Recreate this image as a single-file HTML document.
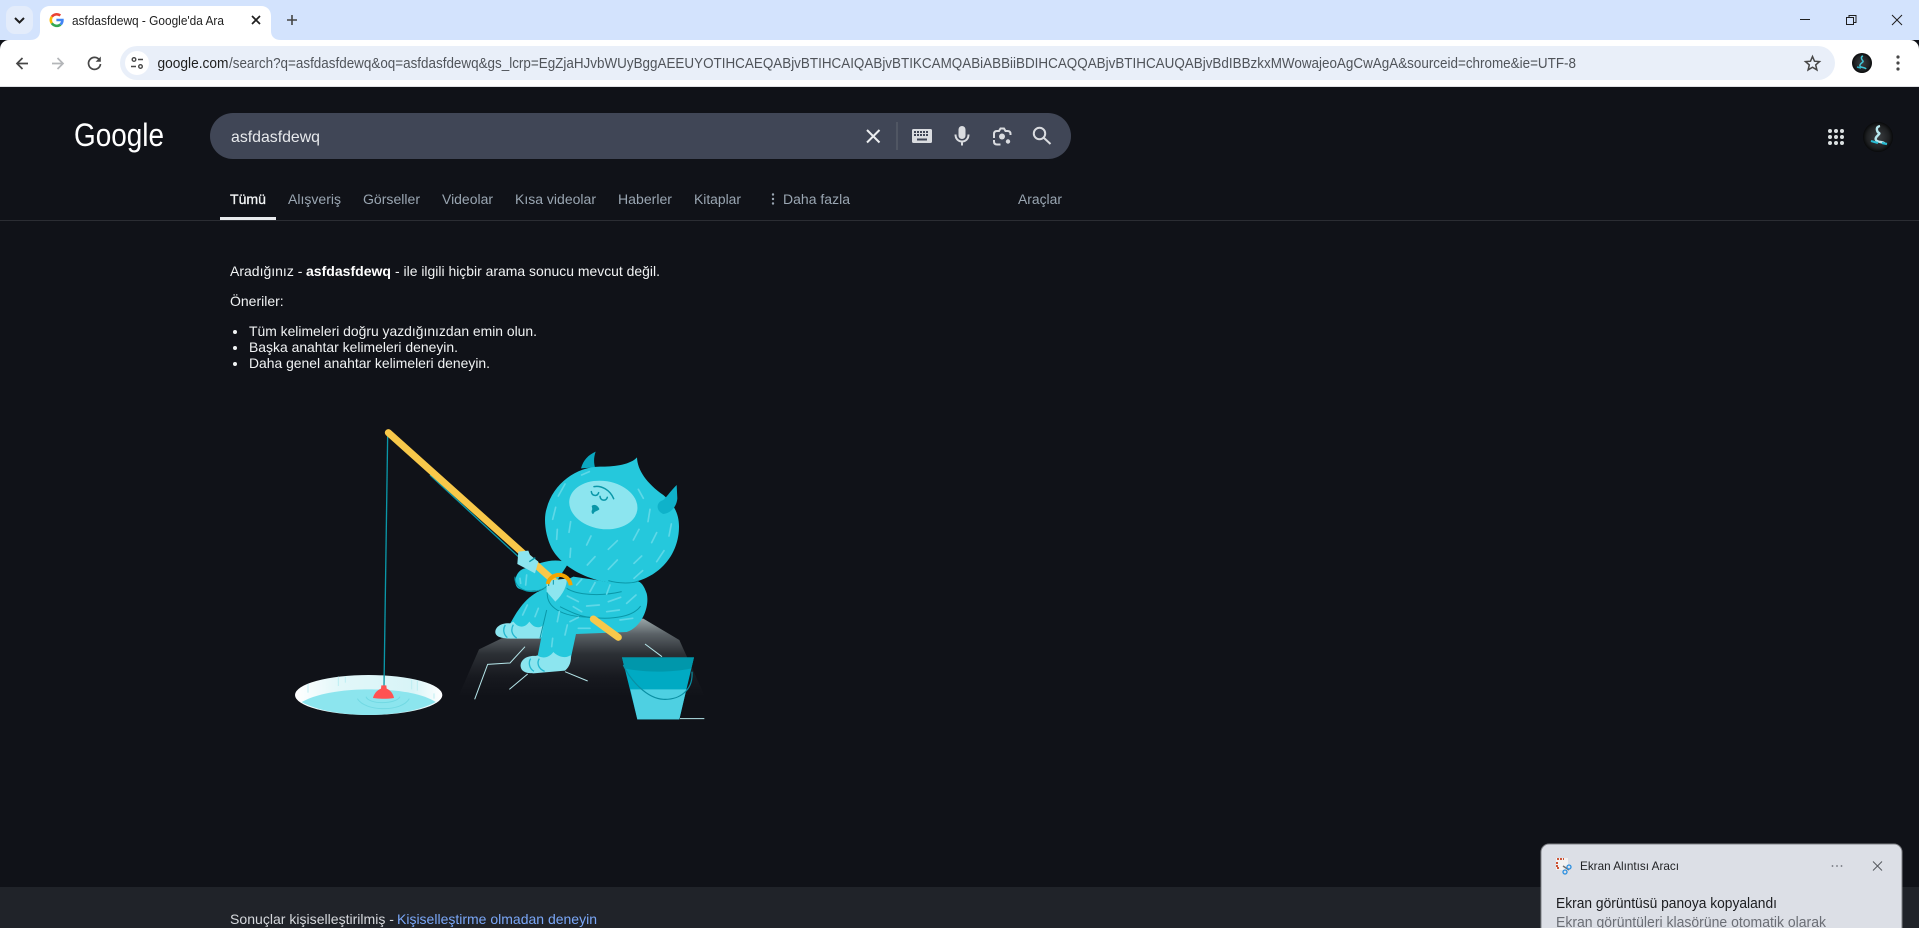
<!DOCTYPE html>
<html lang="tr">
<head>
<meta charset="utf-8">
<title>asfdasfdewq - Google'da Ara</title>
<style>
html,body{margin:0;padding:0;width:1919px;height:928px;overflow:hidden;background:#101218}
svg{display:block;position:absolute;left:0;top:0}
text{font-family:"Liberation Sans",Arial,sans-serif}
</style>
</head>
<body>
<svg width="1919" height="928" viewBox="0 0 1919 928" xmlns="http://www.w3.org/2000/svg">
<defs>
<linearGradient id="rock" x1="0" y1="596" x2="0" y2="830" gradientUnits="userSpaceOnUse"><stop offset="0" stop-color="#9aa6a8"/><stop offset=".2" stop-color="#5a6166"/><stop offset=".45" stop-color="#2c3035"/><stop offset=".75" stop-color="#17191f"/><stop offset="1" stop-color="#101218"/></linearGradient>
<linearGradient id="ice" x1="45" y1="0" x2="487" y2="0" gradientUnits="userSpaceOnUse"><stop offset="0" stop-color="#fff"/><stop offset=".3" stop-color="#e2f7f9"/><stop offset=".8" stop-color="#d8f4f7"/><stop offset="1" stop-color="#fff"/></linearGradient>
<radialGradient id="av" cx=".5" cy=".5" r=".5"><stop offset="0" stop-color="#3c3f42"/><stop offset=".75" stop-color="#1e2022"/><stop offset="1" stop-color="#08090a"/></radialGradient>
</defs>

<!-- Tab strip -->
<rect width="1919" height="40" fill="#d3e3fd"/>
<rect x="6" y="6" width="27" height="28" rx="9" fill="#e3ecfb"/>
<path d="M15 18l4.500 4.500 4.500-4.500" fill="none" stroke="#1f1f1f" stroke-width="2"/>
<path d="M30 40c6 0 10-3 10-9V16c0-6 4-10 10-10h211c6 0 10 4 10 10v15c0 6 4 9 10 9z" fill="#fff"/>
<g fill="none" stroke-width="2.600">
<path d="M60.300 15.500a6 6 0 0 0-8.500 1.300" stroke="#ea4335"/>
<path d="M51.800 16.800a6 6 0 0 0 0 6.400" stroke="#fbbc05"/>
<path d="M51.800 23.200a6 6 0 0 0 8.800 1.300" stroke="#34a853"/>
<path d="M60.600 24.500a6 6 0 0 0 1.800-4.500h-6" stroke="#4285f4"/>
</g>
<text x="72" y="25" font-size="12.500" fill="#1f1f1f" textLength="152" lengthAdjust="spacingAndGlyphs">asfdasfdewq - Google'da Ara</text>
<path d="M252 16l8 8m0-8l-8 8" stroke="#1f1f1f" stroke-width="1.700" fill="none"/>
<path d="M292 15v10m-5-5h10" stroke="#444" stroke-width="1.600" fill="none"/>

<!-- Window controls -->
<path d="M1800 19.500h10" stroke="#1f1f1f" stroke-width="1"/>
<path d="M1846.500 17.500h7v7h-7zM1849 17.500v-2h7v7h-2" fill="none" stroke="#1f1f1f" stroke-width="1"/>
<path d="M1892 15l10 10m0-10l-10 10" stroke="#1f1f1f" stroke-width="1" fill="none"/>

<!-- Toolbar -->
<path d="M0 87V49a9 9 0 0 1 9-9h1901a9 9 0 0 1 9 9v38z" fill="#fff"/>
<rect x="0" y="86" width="1919" height="1" fill="#dfe1e5"/>
<path d="M28 63.500H17m5.500-5.500l-5.500 5.500 5.500 5.500" fill="none" stroke="#474747" stroke-width="1.700"/>
<path d="M52 63.500h11m-5.500-5.500l5.500 5.500-5.500 5.500" fill="none" stroke="#b4b6b9" stroke-width="1.700"/>
<path d="M99.500 60a6 6 0 1 0 1 4" fill="none" stroke="#474747" stroke-width="1.700"/><path d="M100.800 56.500v5.200h-5.200z" fill="#474747"/>
<rect x="120" y="46" width="1715" height="34" rx="17" fill="#e9eff9"/>
<circle cx="137" cy="63" r="12" fill="#fff"/>
<g fill="none" stroke="#474747" stroke-width="1.400"><circle cx="134" cy="59.500" r="1.800"/><path d="M138 59.500h5M131 66.500h5"/><circle cx="140.500" cy="66.500" r="1.800"/></g>
<text x="157.500" y="68" font-size="14.500" fill="#1f1f1f" textLength="71" lengthAdjust="spacingAndGlyphs">google.com</text>
<text x="229" y="68" font-size="14.500" fill="#50545a" textLength="1347" lengthAdjust="spacingAndGlyphs">/search?q=asfdasfdewq&amp;oq=asfdasfdewq&amp;gs_lcrp=EgZjaHJvbWUyBggAEEUYOTIHCAEQABjvBTIHCAIQABjvBTIKCAMQABiABBiiBDIHCAQQABjvBTIHCAUQABjvBdIBBzkxMWowajeoAgCwAgA&amp;sourceid=chrome&amp;ie=UTF-8</text>
<path d="M1812.500 56.500l2 4.700 5 .4-3.800 3.300 1.200 5-4.400-2.700-4.400 2.700 1.200-5-3.800-3.300 5-.4z" fill="none" stroke="#474747" stroke-width="1.500"/>
<circle cx="1862" cy="63" r="10" fill="url(#av)"/>
<path d="M1863 56c-3 1-1 4 0 5s-4 3-3 5 5 1 6 3" fill="none" stroke="#3fc6d8" stroke-width="1.500"/><path d="M1857 67l4 1" stroke="#2fb6cc" stroke-width="1.500"/>
<g fill="#474747"><circle cx="1898" cy="57" r="1.600"/><circle cx="1898" cy="63" r="1.600"/><circle cx="1898" cy="69" r="1.600"/></g>

<!-- Page -->
<rect x="0" y="87" width="1919" height="841" fill="#101218"/>
<text x="74" y="146" font-size="32" fill="#fff" textLength="90" lengthAdjust="spacingAndGlyphs">Google</text>

<rect x="210" y="113" width="861" height="46" rx="23" fill="#404656"/>
<text x="231" y="142" font-size="16" fill="#e8eaed" textLength="89" lengthAdjust="spacingAndGlyphs">asfdasfdewq</text>
<path d="M867 130l12.500 12.500m0-12.500l-12.500 12.500" stroke="#eceef0" stroke-width="2" fill="none"/>
<rect x="896.500" y="122" width="1" height="28" fill="#5f6570"/>
<rect x="912" y="129" width="20" height="14" rx="1.500" fill="#dadce0"/>
<g fill="#404656"><rect x="914" y="131" width="2" height="2"/><rect x="917" y="131" width="2" height="2"/><rect x="920" y="131" width="2" height="2"/><rect x="923" y="131" width="2" height="2"/><rect x="926" y="131" width="2" height="2"/><rect x="914" y="134" width="2" height="2"/><rect x="917" y="134" width="2" height="2"/><rect x="920" y="134" width="2" height="2"/><rect x="923" y="134" width="2" height="2"/><rect x="926" y="134" width="2" height="2"/><rect x="917" y="138.500" width="10" height="2"/></g>
<rect x="958.500" y="126" width="7" height="13" rx="3.500" fill="#dadce0"/>
<path d="M955.500 134.500c0 4.500 3 7 6.500 7s6.500-2.500 6.500-7M962 141.500v4" fill="none" stroke="#dadce0" stroke-width="2"/>
<g fill="none" stroke="#dadce0" stroke-width="2"><path d="M994 138v-4c0-2 1-3 3-3h2l1.500-2.500h3.500l1.500 2.500h2c2 0 3 1 3 3v1"/><path d="M994 140v1.500c0 2 1 3 3 3h3.500"/></g>
<circle cx="1002" cy="136.500" r="3" fill="#dadce0"/><circle cx="1008" cy="141.500" r="2.200" fill="#dadce0"/>
<circle cx="1039.500" cy="133.500" r="5.700" fill="none" stroke="#dadce0" stroke-width="2"/><path d="M1044 138l6.500 6" stroke="#dadce0" stroke-width="2"/>

<g font-size="13.500" fill="#9aa6b2">
<text x="230" y="204" fill="#f1f3f4" font-weight="400" stroke="#f1f3f4" stroke-width=".3" textLength="36" lengthAdjust="spacingAndGlyphs">Tümü</text>
<text x="288" y="204" textLength="53" lengthAdjust="spacingAndGlyphs">Alışveriş</text>
<text x="363" y="204" textLength="57" lengthAdjust="spacingAndGlyphs">Görseller</text>
<text x="442" y="204" textLength="51" lengthAdjust="spacingAndGlyphs">Videolar</text>
<text x="515" y="204" textLength="81" lengthAdjust="spacingAndGlyphs">Kısa videolar</text>
<text x="618" y="204" textLength="54" lengthAdjust="spacingAndGlyphs">Haberler</text>
<text x="694" y="204" textLength="47" lengthAdjust="spacingAndGlyphs">Kitaplar</text>
<text x="783" y="204" textLength="67" lengthAdjust="spacingAndGlyphs">Daha fazla</text>
<text x="1018" y="204" textLength="44" lengthAdjust="spacingAndGlyphs">Araçlar</text>
</g>
<g fill="#9aa6b2"><circle cx="773" cy="194.500" r="1.200"/><circle cx="773" cy="199" r="1.200"/><circle cx="773" cy="203.500" r="1.200"/></g>
<rect x="0" y="220" width="1919" height="1" fill="#2b2d33"/>
<rect x="220" y="217" width="56" height="3" fill="#e8eaed"/>

<g fill="#dadfe0"><circle cx="1830" cy="131" r="2"/><circle cx="1836" cy="131" r="2"/><circle cx="1842" cy="131" r="2"/><circle cx="1830" cy="137" r="2"/><circle cx="1836" cy="137" r="2"/><circle cx="1842" cy="137" r="2"/><circle cx="1830" cy="143" r="2"/><circle cx="1836" cy="143" r="2"/><circle cx="1842" cy="143" r="2"/></g>
<circle cx="1878" cy="137" r="15" fill="url(#av)"/>
<path d="M1880 126c-5 1-3 6-1 7s-5 4-3 7 7 1 9 4" fill="none" stroke="#b8e8ef" stroke-width="2.400"/><path d="M1871 141l7 2M1882 143l5 1" stroke="#28bcd3" stroke-width="2.200"/>

<g font-size="14" fill="#f1f3f4">
<text x="230" y="276">Aradığınız - </text>
<text x="306" y="276" font-weight="700" fill="#fff" textLength="85" lengthAdjust="spacingAndGlyphs">asfdasfdewq</text>
<text x="395" y="276" textLength="265" lengthAdjust="spacingAndGlyphs">- ile ilgili hiçbir arama sonucu mevcut değil.</text>
<text x="230" y="306">Öneriler:</text>
<circle cx="235" cy="332" r="2"/><circle cx="235" cy="348" r="2"/><circle cx="235" cy="364" r="2"/>
<text x="249" y="336" textLength="288" lengthAdjust="spacingAndGlyphs">Tüm kelimeleri doğru yazdığınızdan emin olun.</text>
<text x="249" y="352" textLength="209" lengthAdjust="spacingAndGlyphs">Başka anahtar kelimeleri deneyin.</text>
<text x="249" y="368" textLength="241" lengthAdjust="spacingAndGlyphs">Daha genel anahtar kelimeleri deneyin.</text>
</g>

<!-- Illustration (coords are 3x, origin 280,420) -->
<g transform="translate(280 420) scale(.33333)">
 <!-- ice hole -->
 <ellipse cx="266" cy="825" rx="221" ry="60" fill="url(#ice)"/>
 <path d="M65 846C120 815 210 808 266 808C330 808 420 815 467 846C420 872 340 885 266 885C190 885 110 872 65 846Z" fill="#8ce5ee"/>
 <g stroke="#bdeef2" stroke-width="3" fill="none"><path d="M175 770v28M196 770v18M84 792v26M395 780v28M412 782v30M462 820v16"/></g>
 <g fill="none" stroke="#72d9e3" stroke-width="3"><path d="M258 830c8 24 90 24 102 0"/><path d="M232 836c24 40 134 40 156 0"/></g>
 <path d="M323 45L312 800" stroke="#0a97a8" stroke-width="4" fill="none"/>
 <path d="M304 796h15l1 10c12 5 20 16 22 28c-20 3-43 3-63 0c3-12 11-23 24-28z" fill="#ff5252"/>

 <!-- rock -->
 <path d="M665 655L597 688L535 830H1275L1198 660L1090 596L900 610Z" fill="url(#rock)"/>
 <g fill="none" stroke="#b5e6ea" stroke-width="3"><path d="M735 680L690 729L623 733L584 838"/><path d="M743 762L688 808"/><path d="M855 755L923 783"/><path d="M1095 672L1146 710"/><path d="M1200 896H1273"/></g>

 <!-- far leg and foot -->
 <path d="M800 505C745 520 715 565 690 612L690 650L800 652L860 560Z" fill="#25c8dc"/>
 <path d="M690 610C665 608 645 620 646 638C648 652 668 655 690 656L782 656C790 640 795 625 795 610C780 628 762 625 748 605C735 625 715 625 700 605Z" fill="#8ce5ef"/>
 <g fill="none" stroke="#25b8d0" stroke-width="4"><path d="M676 615c-8 12-6 28 6 38"/><path d="M700 614c-8 14-6 30 10 40"/></g>

 <!-- far arm -->
 <path d="M865 430C830 412 780 425 745 445C710 440 695 490 715 505C745 520 790 510 820 500Z" fill="#25c8dc"/>
 <path d="M705 470C702 500 730 515 760 515C780 512 795 505 800 498" fill="none" stroke="#0a97a8" stroke-width="3"/>

 <!-- head -->
 <path d="M903 145C910 120 925 105 947 95C940 115 942 130 945 142Z" fill="#0aa8c0"/>
 <path d="M1071 112C1072 150 1100 190 1150 225C1185 255 1197 285 1197 320C1197 410 1130 480 1040 490C950 495 850 450 815 385C795 345 790 295 800 265C820 190 890 140 960 140C1000 140 1050 135 1071 112Z" fill="#25c8dc"/>
 <path d="M1190 195C1170 215 1165 225 1150 240C1128 246 1126 272 1150 282C1170 280 1190 262 1192 235Z" fill="#0fb2ca"/>
 <ellipse cx="970" cy="255" rx="103" ry="72" transform="rotate(9 970 255)" fill="#8ce5ef"/>
 <g fill="none" stroke="#0a97a8" stroke-width="4.500" stroke-linecap="round"><path d="M942 200C965 196 990 210 1001 236"/><path d="M934 215c2 14 18 15 22 3"/><path d="M960 229c2 14 18 15 22 3"/></g>
 <path d="M935 258C945 248 958 262 958 268C952 274 944 272 940 282C936 282 934 278 935 272C938 268 936 262 935 258Z" fill="#0a97a8"/>

 <!-- rod back + line -->
 <path d="M450 165L715 410" stroke="#0a97a8" stroke-width="4"/>
 <path d="M325 38L830 490" stroke="#f8c84a" stroke-width="21" stroke-linecap="round"/>

 <!-- main body -->
 <path d="M820 500C800 560 790 625 772 712L870 726L888 642L1040 636C1085 622 1110 560 1100 520C1092 496 1082 484 1072 484C1030 492 990 490 960 482L880 470Z" fill="#25c8dc"/>
 <path d="M770 708C740 705 720 720 722 740C725 760 750 760 760 760L855 752C870 740 875 720 872 705C860 716 835 712 820 696C805 716 785 716 770 705Z" fill="#8ce5ef"/>
 <g fill="none" stroke="#25b8d0" stroke-width="4"><path d="M752 716c-8 12-4 30 10 38"/><path d="M778 716c-8 12-4 30 16 38"/></g>
 <g fill="none" stroke="#0a97a8" stroke-width="3"><path d="M985 482C1020 492 1060 490 1075 483"/><path d="M860 505C890 525 960 530 1025 515"/><path d="M802 515C798 560 840 590 930 592C1000 600 1060 590 1082 558"/><path d="M800 570L780 655"/><path d="M840 560C870 575 900 590 930 592"/></g>

 <!-- rod front -->
 <path d="M940 597L1015 652" stroke="#f8c84a" stroke-width="21" stroke-linecap="round"/>

 <!-- hands -->
 <path d="M715 395L745 392L750 405L775 425L765 460L712 432Z" fill="#8ce5ef"/>
 <path d="M748 425l18-12" stroke="#0a97a8" stroke-width="4"/>
 <path d="M800 482L860 476C862 496 850 522 826 545L800 515Z" fill="#8ce5ef"/>
 <path d="M806 482v16M820 480v14" stroke="#0a97a8" stroke-width="3"/>
 <path d="M803 492A35 35 0 0 1 872 496" fill="none" stroke="#f5a400" stroke-width="12"/>

 <!-- fur dashes -->
 <g stroke="#5ed8e7" stroke-width="5" stroke-linecap="round" fill="none"><path d="M818 298L827 262M835 228L855 192M905 165L928 155M1075 208L1090 235M1110 268L1104 305M1174 312L1167 348M867 337L872 305M830 358L832 328M920 375L933 348M1060 360L1077 328M1115 368L1130 338M985 388L1012 362M870 412L872 385M1130 425L1152 392M922 435L945 410M985 448L1012 420M1062 430L1085 408M1062 475L1088 452M890 495L905 478M930 515L945 488M980 522L990 495M1040 550L1068 525M985 545L1022 532M920 558L958 555M862 528L895 545M880 560L905 575M980 575L1018 570M1020 600L1058 595M895 625L930 625M870 605L895 592M740 465L737 495M720 475L722 490M728 585L742 555M765 590L775 565M832 605L838 575M855 645L862 615M815 680L818 655"/></g>

 <!-- bucket -->
 <path d="M1026 712H1242L1198 898H1072Z" fill="#00aac3"/>
 <path d="M1026 712H1242L1234 745C1180 758 1090 758 1034 745Z" fill="#0097ab"/>
 <path d="M1051 808H1219L1198 898H1072Z" fill="#4ed0e2"/>
 <path d="M1030 735C1050 780 1100 835 1150 838C1200 840 1240 810 1236 755" fill="none" stroke="#0a8fa3" stroke-width="3.500"/>
</g>

<!-- Footer -->
<rect x="0" y="887" width="1919" height="41" fill="#202329"/>
<text x="230" y="924" font-size="14" fill="#d5d8dc" textLength="164" lengthAdjust="spacingAndGlyphs">Sonuçlar kişiselleştirilmiş - </text>
<text x="397" y="924" font-size="14" fill="#7aa7f7" textLength="200" lengthAdjust="spacingAndGlyphs">Kişiselleştirme olmadan deneyin</text>

<!-- Notification -->
<rect x="1541" y="844" width="361" height="110" rx="8" fill="#dcdfe6" stroke="#7e8085" stroke-width="1"/>
<rect x="1556" y="858" width="12" height="12" fill="#f2f2f2"/>
<path d="M1557 859h7M1557 862v5M1557 868h3" stroke="#c8401f" stroke-width="1.800" stroke-dasharray="2 1" fill="none"/>
<path d="M1563 866l6 4" stroke="#707070" stroke-width="1.500"/>
<circle cx="1565" cy="872" r="2" fill="none" stroke="#2b8fe0" stroke-width="1.300"/><circle cx="1569" cy="867" r="2" fill="none" stroke="#2b8fe0" stroke-width="1.300"/>
<text x="1580" y="870" font-size="12" fill="#1f2023" textLength="99" lengthAdjust="spacingAndGlyphs">Ekran Alıntısı Aracı</text>
<g fill="#70737a"><circle cx="1832.500" cy="866" r=".9"/><circle cx="1837" cy="866" r=".9"/><circle cx="1841.500" cy="866" r=".9"/></g>
<path d="M1872.500 861.500l9 9m0-9l-9 9" transform="translate(0.500 0)" stroke="#55585e" stroke-width="1" fill="none"/>
<text x="1556" y="908" font-size="14.500" fill="#1b1c1f" textLength="221" lengthAdjust="spacingAndGlyphs">Ekran görüntüsü panoya kopyalandı</text>
<text x="1556" y="927" font-size="14.500" fill="#6b6e75" textLength="270" lengthAdjust="spacingAndGlyphs">Ekran görüntüleri klasörüne otomatik olarak</text>
</svg>
</body>
</html>
